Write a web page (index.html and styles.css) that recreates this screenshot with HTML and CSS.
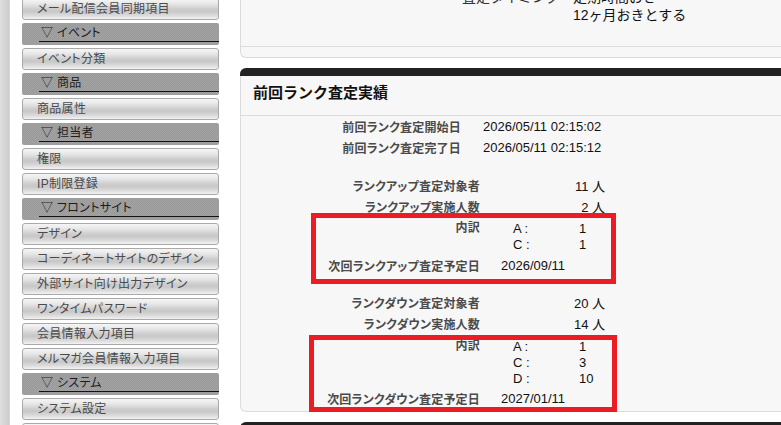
FILE: index.html
```html
<!DOCTYPE html>
<html lang="ja">
<head>
<meta charset="utf-8">
<title>前回ランク査定実績</title>
<link rel="stylesheet" href="styles.css">
</head>
<body>
<div class="page">
  <div class="edge"></div>
  <nav class="side">
    <a class="btn">メール配信会員同期項目</a>
    <div class="cat"><span>▽ イベント</span></div>
    <a class="btn">イベント分類</a>
    <div class="cat"><span>▽ 商品</span></div>
    <a class="btn">商品属性</a>
    <div class="cat"><span>▽ 担当者</span></div>
    <a class="btn">権限</a>
    <a class="btn">IP制限登録</a>
    <div class="cat"><span>▽ フロントサイト</span></div>
    <a class="btn">デザイン</a>
    <a class="btn">コーディネートサイトのデザイン</a>
    <a class="btn">外部サイト向け出力デザイン</a>
    <a class="btn">ワンタイムパスワード</a>
    <a class="btn">会員情報入力項目</a>
    <a class="btn">メルマガ会員情報入力項目</a>
    <div class="cat"><span>▽ システム</span></div>
    <a class="btn">システム設定</a>
    <a class="btn">&nbsp;</a>
  </nav>
  <main class="main">
    <section class="panel p1">
      <div class="p1body">
        <div class="kv kv1"><span class="k">査定タイミング</span><span class="v">定期時間おき</span></div>
        <div class="kv"><span class="k"></span><span class="v">12ヶ月おきとする</span></div>
      </div>
      <div class="pfoot"></div>
    </section>

    <section class="panel p2">
      <div class="phead"></div>
      <h2 class="ptitle">前回ランク査定実績</h2>
      <div class="pbody">
        <div class="grp g1">
          <div class="row"><span class="lbl">前回ランク査定開始日</span><span class="val">2026/05/11 02:15:02</span></div>
          <div class="row"><span class="lbl">前回ランク査定完了日</span><span class="val">2026/05/11 02:15:12</span></div>
        </div>
        <div class="spacer s1"></div>
        <div class="grp g2">
          <div class="row"><span class="lbl">ランクアップ査定対象者</span><span class="val num">11 人</span></div>
          <div class="row"><span class="lbl">ランクアップ実施人数</span><span class="val num">2 人</span></div>
          <div class="row sub up">
            <span class="lbl">内訳</span>
            <div class="val subtbl">
              <div class="subrow"><span class="key">A :</span><span>1</span></div>
              <div class="subrow"><span class="key">C :</span><span>1</span></div>
            </div>
          </div>
          <div class="row"><span class="lbl">次回ランクアップ査定予定日</span><span class="val">2026/09/11</span></div>
        </div>
        <div class="spacer s2"></div>
        <div class="grp g2">
          <div class="row"><span class="lbl">ランクダウン査定対象者</span><span class="val num">20 人</span></div>
          <div class="row"><span class="lbl">ランクダウン実施人数</span><span class="val num">14 人</span></div>
          <div class="row sub down">
            <span class="lbl">内訳</span>
            <div class="val subtbl">
              <div class="subrow"><span class="key">A :</span><span>1</span></div>
              <div class="subrow"><span class="key">C :</span><span>3</span></div>
              <div class="subrow"><span class="key">D :</span><span>10</span></div>
            </div>
          </div>
          <div class="row"><span class="lbl">次回ランクダウン査定予定日</span><span class="val">2027/01/11</span></div>
        </div>
        <div class="mark mark-up"></div>
        <div class="mark mark-down"></div>
      </div>
    </section>

    <section class="panel p3">
      <div class="phead"></div>
      <div class="p3body"></div>
    </section>
  </main>
</div>
</body>
</html>
```

FILE: styles.css
```css
html, body {
  margin: 0;
  padding: 0;
  width: 781px;
  height: 425px;
  overflow: hidden;
  background: #fff;
}
body {
  font-family: "Liberation Sans", "Noto Sans CJK JP", sans-serif;
  font-size: 12px;
  color: #111;
}
.page {
  display: flex;
  align-items: flex-start;
}
.edge {
  flex: none;
  width: 10px;
  height: 425px;
  background: linear-gradient(to right, #dedede, #d2d2d2 70%, #c9c9c9 90%, #e8e8e8);
}

/* sidebar */
.side {
  flex: none;
  width: 197px;
  margin-left: 12px;
  margin-top: -2px;
  display: flex;
  flex-direction: column;
  gap: 3px;
  font-feature-settings: "palt";
}
.btn {
  display: block;
  height: 22px;
  box-sizing: border-box;
  border: 1px solid #a9a9a9;
  border-radius: 3px;
  background: linear-gradient(#f6f6f6 0%, #e6e6e6 25%, #cdcdcd 50%, #c8c8c8 62%, #dadada 82%, #f2f2f2 100%);
  padding-left: 14px;
  line-height: 20px;
  color: #4a4a4a;
  letter-spacing: 0.3px;
  white-space: nowrap;
  overflow: hidden;
}
.cat {
  height: 22px;
  box-sizing: border-box;
  border-radius: 2px;
  background-color: #9e9e9e;
  background-image: repeating-conic-gradient(#a3a3a3 0 25%, #999 0 50%);
  background-size: 2px 2px;
  padding-left: 17px;
}
.cat span {
  display: block;
  height: 18px;
  border-bottom: 1px solid #111;
  padding-left: 2px;
  line-height: 21px;
  color: #1c1c1c;
  letter-spacing: 0.3px;
  white-space: nowrap;
}

/* main */
.main {
  flex: none;
  width: 600px;
  margin-left: 21px;
}
.panel {
  background: #f7f7f7;
  border: 1px solid #dcdcdc;
}
.p1 {
  margin-top: -13px;
  border-top: 0;
  border-radius: 0 0 6px 6px;
}
.p1body {
  height: 59px;
}
.kv {
  display: flex;
  height: 17px;
  align-items: center;
  white-space: nowrap;
  font-size: 14px;
}
.kv1 {
  height: 18px;
}
.kv .k {
  flex: none;
  width: 319px;
  text-align: right;
  color: #333;
}
.kv .v {
  margin-left: 13px;
  color: #111;
}
.pfoot {
  height: 10px;
  border-top: 1px solid #dcdcdc;
}

.p2 {
  margin-top: 10px;
  border-top: 0;
  border-radius: 6px 6px 6px 6px;
}
.phead {
  height: 8px;
  margin: 0 -1px;
  background: #222;
  border-radius: 6px 6px 0 0;
}
.ptitle {
  margin: 0;
  height: 39px;
  line-height: 34px;
  padding-left: 12px;
  font-size: 15px;
  font-weight: bold;
  color: #111;
  border-bottom: 1px solid #dcdcdc;
}
.pbody {
  position: relative;
  padding-bottom: 2px;
}
.row {
  display: flex;
  height: 21px;
  align-items: center;
  white-space: nowrap;
}
.lbl {
  flex: none;
  text-align: right;
  font-weight: bold;
  color: #4a4a4a;
  font-feature-settings: "palt";
  letter-spacing: 0.2px;
}
.val {
  font-size: 13px;
  color: #111;
}
.g1 .lbl { width: 220px; }
.g1 .val { margin-left: 22px; }
.g2 .lbl { width: 239px; }
.g2 .val { margin-left: 21px; width: 104px; }
.g2 .num { text-align: right; }
.s1 { height: 17px; }
.s2 { height: 16px; }
.row.sub {
  height: auto;
  align-items: flex-start;
}
.row.sub .lbl { line-height: 16px; }
.row.up { padding: 3px 0 3px; }
.row.down { padding: 4px 0 2px; }
.subrow {
  display: flex;
  height: 16px;
  align-items: center;
}
.key {
  flex: none;
  width: 78px;
  padding-left: 12px;
  box-sizing: border-box;
}

/* red annotation rectangles drawn over the table */
.mark {
  position: absolute;
  box-sizing: border-box;
  border: 5px solid #ec1c24;
}
.mark-up {
  left: 70px;
  top: 97px;
  width: 305px;
  height: 71px;
}
.mark-down {
  left: 68px;
  top: 219px;
  width: 308px;
  height: 77px;
}

.p3 {
  margin-top: 10px;
  border-top: 0;
  border-radius: 6px 6px 0 0;
}
.p3body {
  height: 40px;
}
```
